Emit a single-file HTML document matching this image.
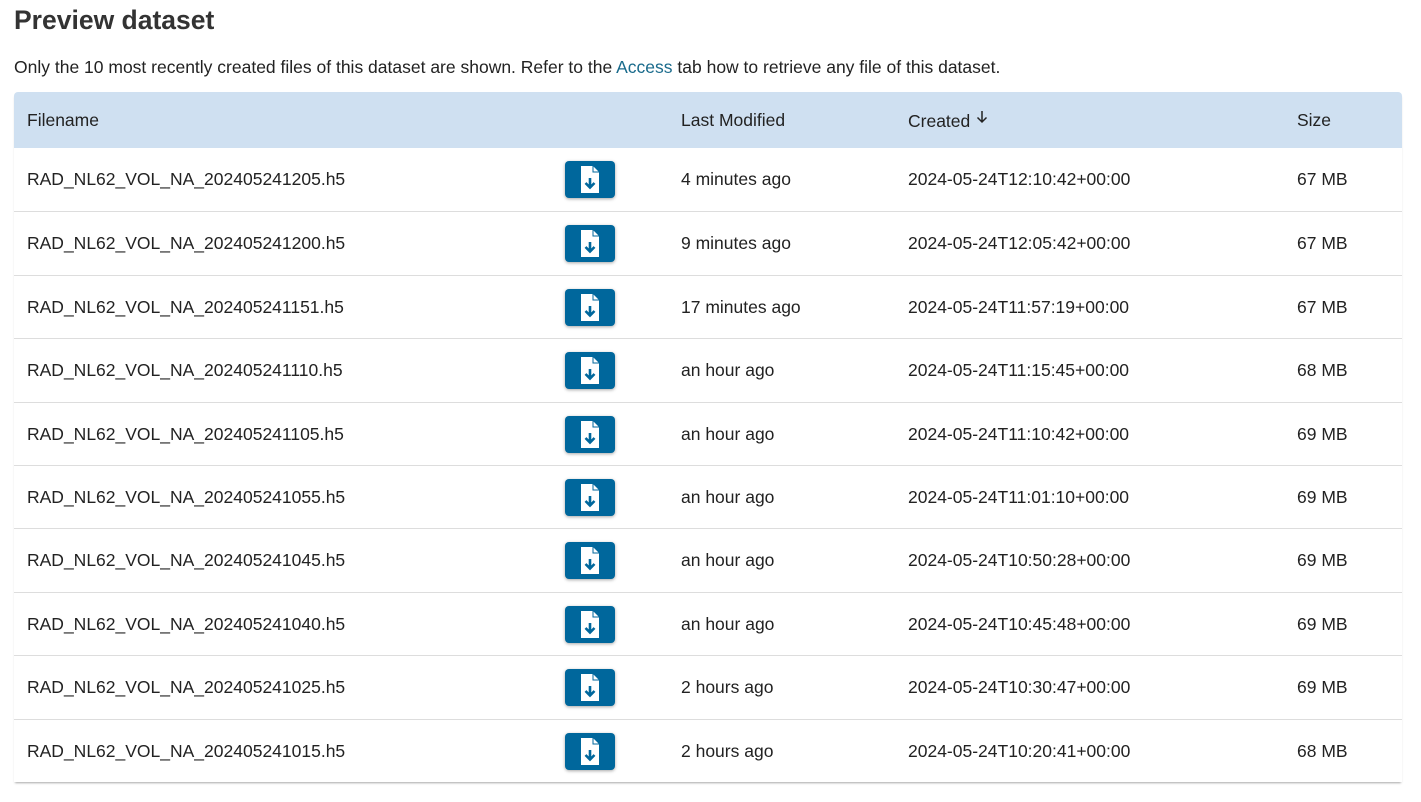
<!DOCTYPE html>
<html><head><meta charset="utf-8"><style>
*{margin:0;padding:0;box-sizing:border-box}
body{width:1421px;height:802px;background:#fff;font-family:"Liberation Sans",sans-serif;color:#222;position:relative;overflow:hidden}
h1{position:absolute;left:14px;top:5px;font-size:26.5px;font-weight:bold;color:#333}
p.d{position:absolute;left:14px;top:57px;font-size:17.5px;color:#222}
p.d a{color:#1a6b8c;text-decoration:none}
.tbl{position:absolute;left:14px;top:92px;width:1388px;height:690px;box-shadow:0 2px 2px -1px rgba(0,0,0,.35);border-radius:4px 4px 0 0}
.hd{position:absolute;left:0;top:0;width:1388px;height:56px;background:#cfe0f1;border-radius:4px 4px 0 0}
.c{position:absolute;font-size:17.5px;line-height:20px;color:#222;white-space:nowrap}
.row{position:absolute;left:0;width:1388px;height:63.4px;border-top:1px solid #ddd}
.btn{position:absolute;left:551px;width:50px;height:37px;background:#00679c;border-radius:4px;box-shadow:0 1px 3px rgba(0,0,0,.35)}
.btn svg{position:absolute;left:15px;top:4px}
</style></head><body>
<h1>Preview dataset</h1>
<p class="d">Only the 10 most recently created files of this dataset are shown. Refer to the <a href="#">Access</a> tab how to retrieve any file of this dataset.</p>
<div class="tbl">
<div class="hd">
<div class="c" style="left:13px;top:18px">Filename</div>
<div class="c" style="left:667px;top:18px">Last Modified</div>
<div class="c" style="left:894px;top:18px">Created<svg width="12" height="14" viewBox="0 0 12 14" style="vertical-align:3px;margin-left:6px"><path d="M6 1v11M1.5 7.5L6 12l4.5-4.5" stroke="#222" stroke-width="1.5" fill="none"/></svg></div>
<div class="c" style="left:1283px;top:18px">Size</div>
</div>
<div id="rows"></div>
</div>
<script>
var d=[["1205","4 minutes ago","12:10:42","67"],["1200","9 minutes ago","12:05:42","67"],["1151","17 minutes ago","11:57:19","67"],["1110","an hour ago","11:15:45","68"],["1105","an hour ago","11:10:42","69"],["1055","an hour ago","11:01:10","69"],["1045","an hour ago","10:50:28","69"],["1040","an hour ago","10:45:48","69"],["1025","2 hours ago","10:30:47","69"],["1015","2 hours ago","10:20:41","68"]];
var h="";
d.forEach(function(r,i){
var t=56+i*63.4;
h+='<div class="row" style="top:'+t+'px;'+(i==0?'border-top:none':'')+'">'+
'<div class="c" style="left:13px;top:21px">RAD_NL62_VOL_NA_20240524'+r[0]+'.h5</div>'+
'<div class="btn" style="top:13px"><svg width="20" height="29" viewBox="0 0 20 29"><path d="M1 1h12l6 6v21H1z" fill="#fff"/><path d="M13 1v6h6" fill="none" stroke="#00679c" stroke-width="1"/><path d="M10 13v9M5.5 18l4.5 4.5 4.5-4.5" stroke="#00679c" stroke-width="2.6" fill="none"/></svg></div>'+
'<div class="c" style="left:667px;top:21px">'+r[1]+'</div>'+
'<div class="c" style="left:894px;top:21px">2024-05-24T'+r[2]+'+00:00</div>'+
'<div class="c" style="left:1283px;top:21px">'+r[3]+' MB</div></div>';
});
document.getElementById("rows").innerHTML=h;
</script>
</body></html>
